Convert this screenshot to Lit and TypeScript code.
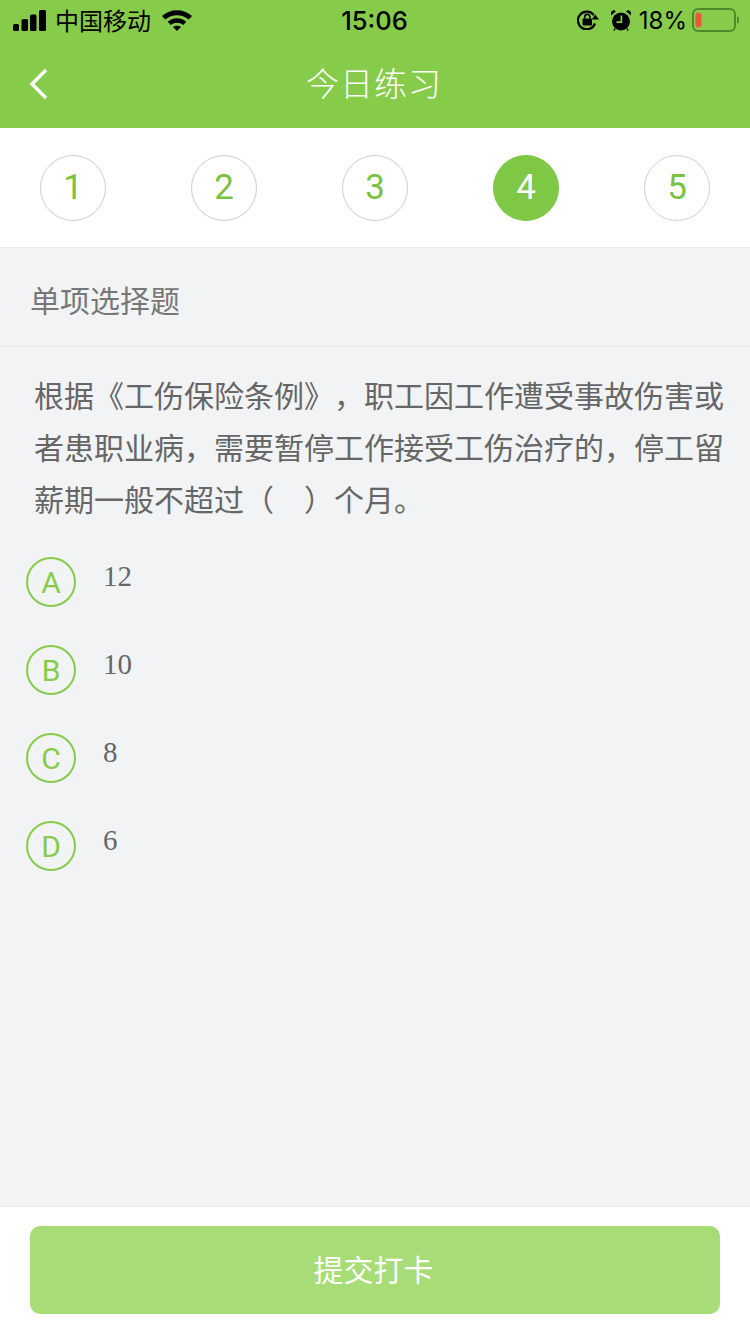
import { LitElement, html, css } from "lit";
import { customElement, state } from "lit/decorators.js";

interface Option {
  key: string;
  text: string;
}

@customElement("app-root")
export class AppRoot extends LitElement {
  @state() current = 4;

  options: Option[] = [
    { key: "A", text: "12" },
    { key: "B", text: "10" },
    { key: "C", text: "8" },
    { key: "D", text: "6" },
  ];

  renderStatus() {
    return html`
      <div class="status">
        <div class="status-left">
          <svg class="signal" width="33" height="21" viewBox="0 0 33 21">
            <rect x="0" y="14" width="6" height="7" rx="1.5"></rect>
            <rect x="8.5" y="9" width="6.5" height="12" rx="1.5"></rect>
            <rect x="17" y="4.5" width="6.5" height="16.5" rx="1.5"></rect>
            <rect x="26" y="0" width="7" height="21" rx="1.5"></rect>
          </svg>
          <span class="carrier">中国移动</span>
          <svg class="wifi" width="30" height="22" viewBox="0 0 30 22">
            <path d="M0 7C8.500-.8 21.500-.8 30 7L26.800 10.600C19.800 4.800 10.200 4.800 3.200 10.600Z"></path>
            <path d="M5.700 12.700C11.200 8.200 18.800 8.200 24.300 12.700L21.200 16C17.400 13.100 12.600 13.100 8.800 16Z"></path>
            <path d="M11 18C13.300 16.200 16.700 16.200 19 18L15 22Z"></path>
          </svg>
        </div>
        <div class="time">15:06</div>
        <div class="status-right">
          <svg class="lock" width="22" height="20" viewBox="0 0 22 20">
            <path d="M16.800 5.200A8.800 8.800 0 1 0 18 13.500" fill="none" stroke="#000" stroke-width="2.200"></path>
            <path d="M14.800 9.500H22L18.200 4.500Z"></path>
            <rect x="5.500" y="8.500" width="9.500" height="7" rx="1"></rect>
            <path d="M7.700 8.500V7a2.600 2.600 0 0 1 5.200 0V8.500" fill="none" stroke="#000" stroke-width="1.600"></path>
          </svg>
          <svg class="alarm" width="20" height="21" viewBox="0 0 20 21">
            <circle cx="10" cy="11.500" r="9"></circle>
            <path d="M0 5.500 5 1.300 2.600 0 0 2ZM20 5.500 15 1.300 17.400 0 20 2Z"></path>
            <path d="M10.400 5.500V12.200H5.500" fill="none" stroke="#86cc4a" stroke-width="1.700"></path>
            <path d="M4 18.500 3 20.500M16 18.500 17 20.500" stroke="#000" stroke-width="1.500"></path>
          </svg>
          <span class="percent">18%</span>
          <svg class="battery" width="47" height="24" viewBox="0 0 47 24">
            <rect x="1" y="1" width="42" height="22" rx="5" fill="none" stroke="#4f8a2a" stroke-width="2"></rect>
            <rect x="3.500" y="4.500" width="6" height="15" rx="3" fill="#f0553a"></rect>
            <rect x="45" y="8.500" width="1.800" height="7" rx="0.900" fill="#4f8a2a"></rect>
          </svg>
        </div>
      </div>
    `;
  }

  render() {
    return html`
      <div class="page">
        <header class="header">
          ${this.renderStatus()}
          <div class="nav">
            <svg class="back" width="20" height="34" viewBox="0 0 20 34">
              <path d="M17 3 3 17 17 31" fill="none" stroke="#fff" stroke-width="3.400"></path>
            </svg>
            <span class="title">今日练习</span>
          </div>
        </header>

        <div class="steps">
          ${[1, 2, 3, 4, 5].map(
            (n) => html`<div class="step ${n === this.current ? "active" : ""}">${n}</div>`
          )}
        </div>

        <div class="type">单项选择题</div>

        <main class="body">
          <p class="question">
            根据《工伤保险条例》，职工因工作遭受事故伤害或者患职业病，需要暂停工作接受工伤治疗的，停工留薪期一般不超过（　）个月。
          </p>
          <div class="options">
            ${this.options.map(
              (o) => html`
                <div class="option">
                  <div class="badge">${o.key}</div>
                  <div class="answer">${o.text}</div>
                </div>
              `
            )}
          </div>
        </main>

        <footer class="footer">
          <button class="submit">提交打卡</button>
        </footer>
      </div>
    `;
  }

  static styles = css`
    :host {
      display: block;
      font-family: "Noto Sans CJK SC", sans-serif;
      text-spacing-trim: space-all;
      font-feature-settings: "chws" 0, "palt" 0;
    }
    .page {
      display: flex;
      flex-direction: column;
      width: 750px;
      height: 1334px;
      background: #f2f3f5;
      overflow: hidden;
    }
    .header {
      background: #86cc4a;
      height: 128px;
      flex: none;
    }
    .status {
      display: grid;
      grid-template-columns: 1fr auto 1fr;
      align-items: center;
      height: 40px;
      padding: 0 11px 0 13px;
      color: #000;
    }
    .status svg {
      display: block;
      fill: #000;
    }
    .status-left {
      display: flex;
      align-items: center;
    }
    .carrier {
      font-size: 24px;
      margin-left: 9px;
      margin-right: 11px;
      line-height: 40px;
    }
    .time {
      font-family: "Inter", "Liberation Sans", sans-serif;
      font-size: 25.5px;
      font-weight: 500;
      margin-right: 3px;
    }
    .status-right {
      display: flex;
      align-items: center;
      justify-content: flex-end;
    }
    .alarm {
      margin-left: 12px;
    }
    .percent {
      font-family: "Inter", "Liberation Sans", sans-serif;
      font-size: 24px;
      margin-left: 8px;
      margin-right: 5px;
    }
    .nav {
      position: relative;
      display: flex;
      align-items: center;
      justify-content: center;
      box-sizing: border-box;
      height: 88px;
      padding-bottom: 4px;
    }
    .back {
      position: absolute;
      left: 29px;
      top: 27px;
    }
    .title {
      color: #fff;
      font-size: 33px;
      font-weight: 300;
      letter-spacing: 1px;
      margin-right: 2px;
    }
    .steps {
      flex: none;
      display: flex;
      justify-content: space-between;
      align-items: center;
      box-sizing: border-box;
      height: 120px;
      padding: 0 40px;
      background: #fff;
      border-bottom: 1px solid #e8e8e8;
    }
    .step {
      box-sizing: border-box;
      width: 66px;
      height: 66px;
      border-radius: 50%;
      border: 1px solid #cfcfcf;
      display: flex;
      align-items: center;
      justify-content: center;
      color: #7cc242;
      font-family: "Roboto", "Liberation Sans", sans-serif;
      font-size: 35px;
    }
    .step.active {
      background: #7fc845;
      border-color: #7fc845;
      color: #fff;
    }
    .type {
      flex: none;
      box-sizing: border-box;
      height: 99px;
      padding: 3px 30px 0;
      display: flex;
      align-items: center;
      color: #777;
      font-size: 30px;
      border-bottom: 1px solid #e8e8e8;
    }
    .body {
      flex: 1;
      padding-top: 21px;
    }
    .question {
      margin: 0;
      padding: 0 20px 0 34px;
      color: #666;
      font-size: 30px;
      line-height: 52px;
    }
    .options {
      display: flex;
      flex-direction: column;
      gap: 38px;
      margin-top: 33px;
      padding-left: 26px;
    }
    .option {
      display: flex;
      gap: 27px;
    }
    .badge {
      box-sizing: border-box;
      flex: none;
      width: 50px;
      height: 50px;
      border-radius: 50%;
      border: 2px solid #86cc4a;
      display: flex;
      align-items: center;
      justify-content: center;
      color: #86cc4a;
      font-family: "Roboto", "Liberation Sans", sans-serif;
      font-size: 30px;
    }
    .answer {
      color: #666;
      font-family: "Liberation Serif", serif;
      font-size: 29px;
      line-height: 38px;
    }
    .footer {
      flex: none;
      box-sizing: border-box;
      height: 128px;
      padding: 19px 30px 0;
      background: #fff;
      border-top: 1px solid #e8e8e8;
    }
    .submit {
      display: block;
      width: 100%;
      height: 88px;
      padding: 0 3px 4px 0;
      border: none;
      border-radius: 10px;
      background: #a8dc76;
      color: #fff;
      font-family: inherit;
      font-size: 30px;
    }
  `;
}
